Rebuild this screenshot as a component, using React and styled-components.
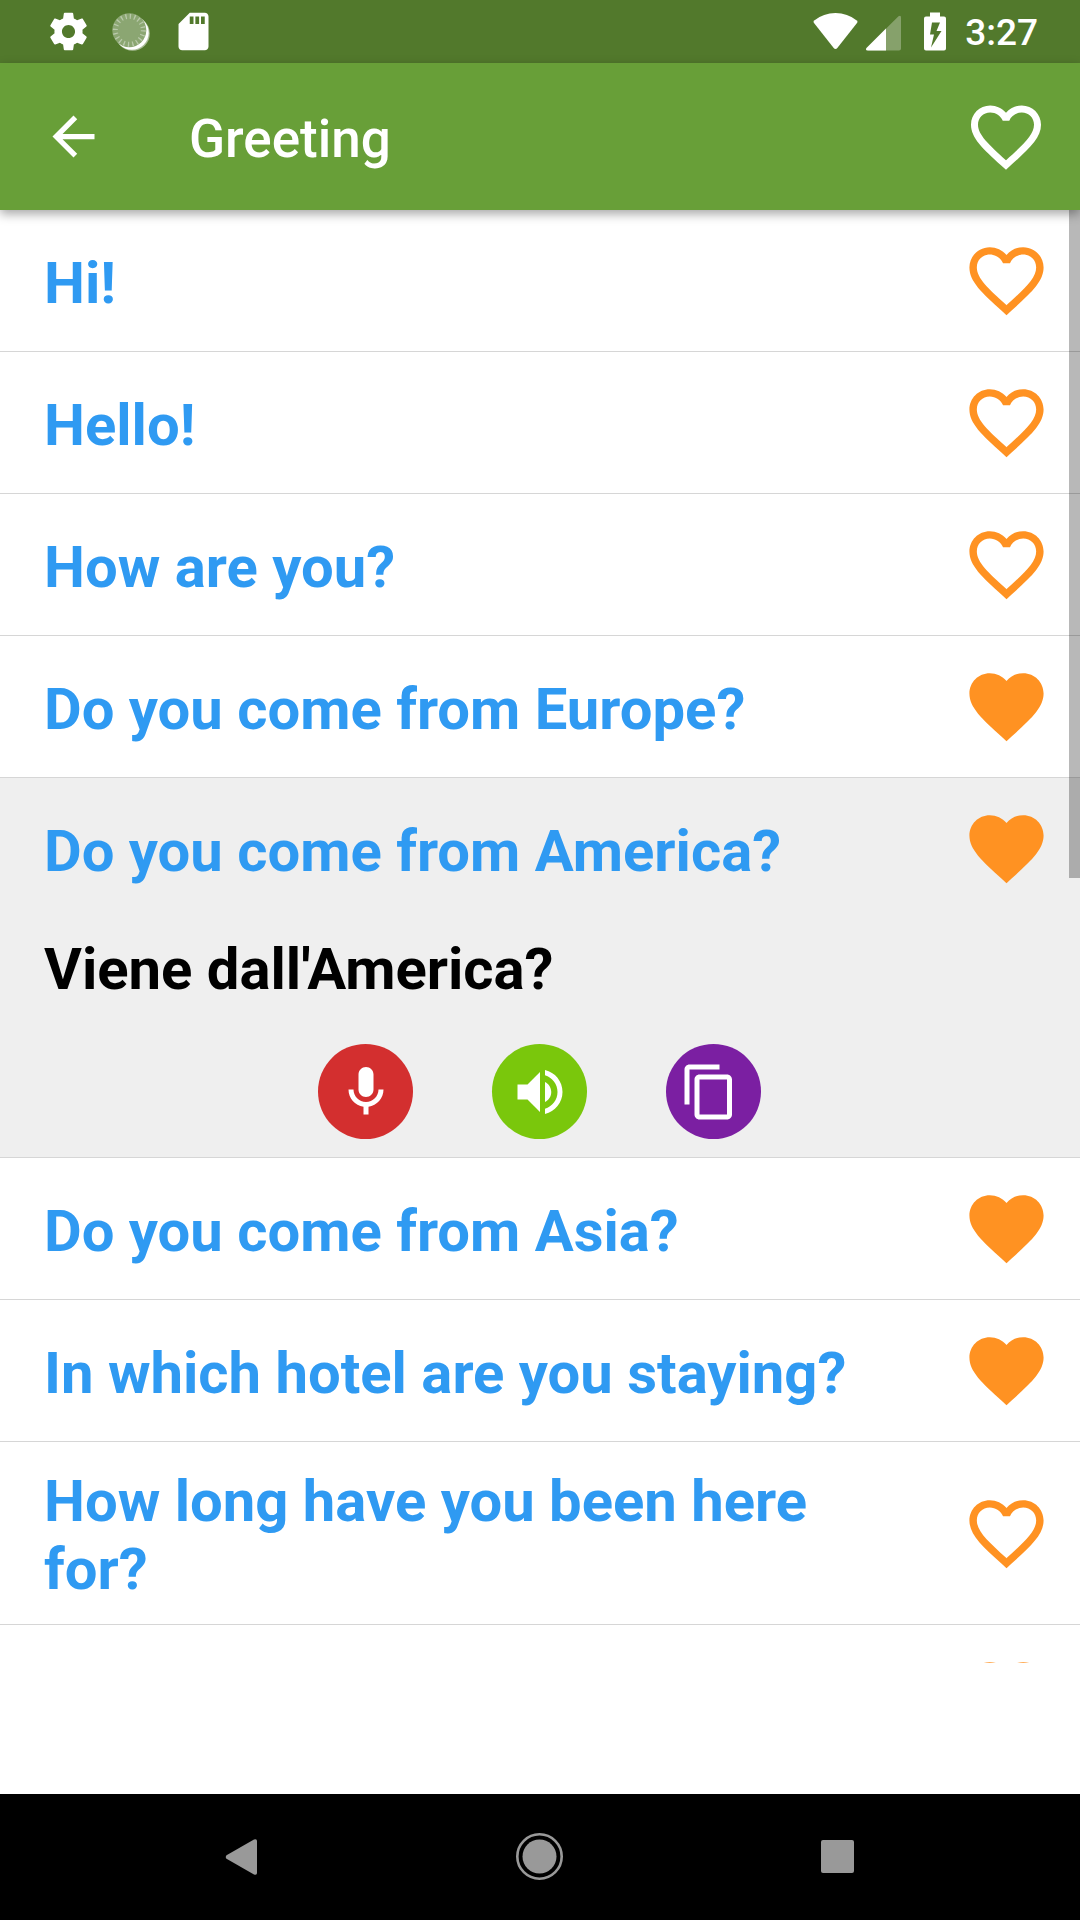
import React, { useState } from "react"
import styled, { createGlobalStyle } from "styled-components"

const GlobalStyle = createGlobalStyle`
  * {
    box-sizing: border-box;
  }
  body {
    margin: 0;
    background: #fff;
    font-family: Roboto, sans-serif;
  }
  button {
    padding: 0;
    border: none;
    background: none;
    font: inherit;
    cursor: pointer;
  }
  svg {
    display: block;
    flex: none;
  }
`

const Screen = styled.div`
  display: flex;
  flex-direction: column;
  height: 100vh;
`

const StatusBar = styled.div`
  display: flex;
  justify-content: space-between;
  align-items: center;
  flex: none;
  height: 63px;
  padding: 0 42px 0 46px;
  background: #52792c;
  color: #fff;
`

const StatusGroup = styled.div`
  display: flex;
  align-items: center;
  gap: ${({ $gap }) => $gap}px;
`

const Clock = styled.time`
  padding-top: 3px;
  font-size: 37px;
  font-weight: 500;
  line-height: 44px;
`

const AppBar = styled.header`
  position: relative;
  z-index: 2;
  display: flex;
  align-items: center;
  flex: none;
  height: 147px;
  padding: 0 32px 0 42px;
  background: #689f38;
  color: #fff;
  box-shadow: 0 4px 10px rgba(0, 0, 0, 0.35);
  h1 {
    flex: 1;
    margin: 0;
    padding: 4px 0 0 84px;
    font-size: 53px;
    font-weight: 500;
    line-height: 62px;
  }
`

const IconButton = styled.button`
  display: flex;
  flex: none;
  color: ${({ $color }) => $color || "#fff"};
`

const ListArea = styled.main`
  position: relative;
  flex: 1;
  min-height: 0;
  overflow: hidden;
`

const ScrollThumb = styled.div`
  position: absolute;
  top: 0;
  right: 0;
  width: 11px;
  height: 46%;
  background: rgba(0, 0, 0, 0.28);
`

const PhraseList = styled.ul`
  margin: 0;
  padding: 0;
  list-style: none;
`

const PhraseItem = styled.li`
  border-bottom: 1px solid #d6d6d6;
  background: ${({ $open }) => ($open ? "#efefef" : "#fff")};
`

const PhraseRow = styled.div`
  display: flex;
  align-items: center;
  min-height: 141px;
  padding: 21px 29px 21px 44px;
`

const PhraseText = styled.button`
  flex: 1;
  padding: 4px 110px 0 0;
  color: #2f9af2;
  font-size: 58px;
  font-weight: 700;
  line-height: 68px;
  text-align: left;
`

const Answer = styled.div`
  padding: 16px 45px 18px 44px;
  p {
    margin: 0 0 41px;
    color: #000;
    font-size: 58px;
    font-weight: 700;
    line-height: 68px;
  }
`

const Actions = styled.div`
  display: flex;
  justify-content: center;
  gap: 79px;
`

const RoundButton = styled.button`
  display: flex;
  align-items: center;
  justify-content: center;
  width: 95px;
  height: 95px;
  border-radius: 50%;
  background: ${({ $color }) => $color};
  color: #fff;
`

const AdSlot = styled.div`
  flex: none;
  height: 131px;
`

const NavBar = styled.nav`
  display: flex;
  justify-content: center;
  align-items: center;
  gap: 198px;
  flex: none;
  height: 126px;
  background: #000;
  button {
    display: flex;
    justify-content: center;
    width: 100px;
    color: #999;
  }
`

const Icon = ({ size, children, box = 24 }) => (
  <svg
    width={size}
    height={size}
    viewBox={`0 0 ${box} ${box}`}
    fill="currentColor"
    aria-hidden="true"
  >
    {children}
  </svg>
)

const HEART =
  "M12 21.35l-1.45-1.32C5.4 15.36 2 12.28 2 8.5 2 5.42 4.42 3 7.5 3c1.74 0 3.41.81 4.5 2.09C13.09 3.81 14.76 3 16.5 3 19.58 3 22 5.42 22 8.5c0 3.78-3.4 6.86-8.55 11.54L12 21.35z"
const HEART_BORDER =
  "M16.5 3c-1.74 0-3.41.81-4.5 2.09C10.91 3.81 9.24 3 7.5 3 4.42 3 2 5.42 2 8.5c0 3.78 3.4 6.86 8.55 11.54L12 21.35l1.45-1.32C18.6 15.36 22 12.28 22 8.5 22 5.42 19.58 3 16.5 3zm-4.4 15.55l-.1.1-.1-.1C7.14 14.24 4 11.39 4 8.5 4 6.5 5.5 5 7.5 5c1.54 0 3.04.99 3.57 2.36h1.87C13.46 5.99 14.96 5 16.5 5c2 0 3.5 1.5 3.5 3.5 0 2.89-3.14 5.74-7.9 10.05z"

const Heart = ({ size, filled }) => (
  <Icon size={size}>
    <path d={filled ? HEART : HEART_BORDER} />
  </Icon>
)

const Spinner = () => (
  <Icon size={38} box={38}>
    <circle cx="20.6" cy="20.6" r="17.2" opacity="0.5" />
    <circle cx="19.8" cy="19.8" r="16.9" />
    <circle cx="17.3" cy="17.3" r="17" fill="#8ba672" />
    <circle
      cx="17.3"
      cy="17.3"
      r="14"
      fill="none"
      stroke="#b9c9aa"
      strokeWidth="5"
      strokeDasharray="1.3 3.1"
    />
  </Icon>
)

const phrases = [
  { text: "Hi!" },
  { text: "Hello!" },
  { text: "How are you?" },
  { text: "Do you come from Europe?", liked: true },
  {
    text: "Do you come from America?",
    answer: "Viene dall'America?",
    liked: true,
  },
  { text: "Do you come from Asia?", liked: true },
  { text: "In which hotel are you staying?", liked: true },
  { text: "How long have you been here for?" },
  { text: "" },
]

const Phrase = ({ text, answer, liked, open, onToggle }) => {
  const [favorite, setFavorite] = useState(Boolean(liked))

  return (
    <PhraseItem $open={open}>
      <PhraseRow>
        <PhraseText aria-expanded={open} onClick={onToggle}>
          {text}
        </PhraseText>
        <IconButton
          $color="#ff9222"
          aria-label="Favorite"
          aria-pressed={favorite}
          onClick={() => setFavorite(!favorite)}
        >
          <Heart size={89} filled={favorite} />
        </IconButton>
      </PhraseRow>
      {open && answer && (
        <Answer>
          <p>{answer}</p>
          <Actions>
            <RoundButton $color="#d32f2f" aria-label="Record">
              <Icon size={60}>
                <path d="M12 14c1.66 0 3-1.34 3-3V5c0-1.66-1.34-3-3-3S9 3.34 9 5v6c0 1.66 1.34 3 3 3zm5-3c0 2.76-2.24 5-5 5s-5-2.24-5-5H5c0 3.53 2.61 6.43 6 6.92V21h2v-3.08c3.39-.49 6-3.39 6-6.92h-2z" />
              </Icon>
            </RoundButton>
            <RoundButton $color="#7ac70c" aria-label="Listen">
              <Icon size={60}>
                <path d="M3 9v6h4l5 5V4L7 9H3zm13.5 3c0-1.77-1.02-3.29-2.5-4.03v8.05c1.48-.73 2.5-2.25 2.5-4.02zM14 3.23v2.06c2.89.86 5 3.54 5 6.71s-2.11 5.85-5 6.71v2.06c4.01-.91 7-4.49 7-8.77s-2.99-7.86-7-8.77z" />
              </Icon>
            </RoundButton>
            <RoundButton $color="#7b1fa2" aria-label="Copy">
              <Icon size={60}>
                <path d="M14.2 1h-12c-1.1 0-2 .9-2 2v14h2V3h12V1zm3 4h-11c-1.1 0-2 .9-2 2v14c0 1.1.9 2 2 2h11c1.1 0 2-.9 2-2V7c0-1.1-.9-2-2-2zm0 16h-11V7h11v14z" />
              </Icon>
            </RoundButton>
          </Actions>
        </Answer>
      )}
    </PhraseItem>
  )
}

const App = () => {
  const [openIndex, setOpenIndex] = useState(4)

  return (
    <Screen>
      <GlobalStyle />
      <StatusBar>
        <StatusGroup $gap={21}>
          <Icon size={45}>
            <path d="M19.43 12.98c.04-.32.07-.64.07-.98s-.03-.66-.07-.98l2.11-1.65c.19-.15.24-.42.12-.64l-2-3.46c-.12-.22-.39-.3-.61-.22l-2.49 1c-.52-.4-1.08-.73-1.69-.98l-.38-2.65C14.46 2.18 14.25 2 14 2h-4c-.25 0-.46.18-.49.42l-.38 2.65c-.61.25-1.17.59-1.69.98l-2.49-1c-.23-.09-.49 0-.61.22l-2 3.46c-.13.22-.07.49.12.64l2.11 1.65c-.04.32-.07.65-.07.98s.03.66.07.98l-2.11 1.65c-.19.15-.24.42-.12.64l2 3.46c.12.22.39.3.61.22l2.49-1c.52.4 1.08.73 1.69.98l.38 2.65c.03.24.24.42.49.42h4c.25 0 .46-.18.49-.42l.38-2.65c.61-.25 1.17-.59 1.69-.98l2.49 1c.23.09.49 0 .61-.22l2-3.46c.12-.22.07-.49-.12-.64l-2.11-1.65zM12 15.5c-1.93 0-3.5-1.57-3.5-3.5s1.57-3.5 3.5-3.5 3.5 1.57 3.5 3.5-1.57 3.5-3.5 3.5z" />
          </Icon>
          <Spinner />
          <Icon size={45}>
            <path d="M18 2h-8L4.02 8 4 20c0 1.1.9 2 2 2h12c1.1 0 2-.9 2-2V4c0-1.1-.9-2-2-2zm-6 6h-2V4h2v4zm3 0h-2V4h2v4zm3 0h-2V4h2v4z" />
          </Icon>
        </StatusGroup>
        <StatusGroup $gap={8}>
          <Icon size={45} box={45}>
            <path d="M22.5 40q-1 0-2-1.2L.8 13.8Q0 12.5 1.2 11.500 10.500 4 22.500 4T43.800 11.500q1.200 1 .4 2.300L24.500 38.800q-1 1.200-2 1.200z" />
          </Icon>
          <Icon size={38} box={38}>
            <path
              d="M32.500 3.300Q35 1.500 35 4.500V35.500q0 2-2 2H2q-3 0-1.500-2.500z"
              opacity="0.3"
            />
            <path d="M20 15.500v22H2q-3 0-1.500-2.500z" />
          </Icon>
          <Icon size={45} box={45}>
            <path
              fillRule="evenodd"
              d="M18 3.500h10v4h4q2 0 2 2v30q0 2-2 2H14q-2 0-2-2v-30q0-2 2-2h4zM20 13.500l-2 12h4l-3 13L29.500 22h-5L28 13.500z"
            />
          </Icon>
          <Clock>3:27</Clock>
        </StatusGroup>
      </StatusBar>
      <AppBar>
        <IconButton aria-label="Back">
          <Icon size={63}>
            <path d="M20 11H7.83l5.59-5.59L12 4l-8 8 8 8 1.41-1.41L7.83 13H20v-2z" />
          </Icon>
        </IconButton>
        <h1>Greeting</h1>
        <IconButton aria-label="Favorites">
          <Heart size={84} />
        </IconButton>
      </AppBar>
      <ListArea>
        <PhraseList>
          {phrases.map((phrase, i) => (
            <Phrase
              key={i}
              {...phrase}
              open={openIndex === i}
              onToggle={() => setOpenIndex(openIndex === i ? -1 : i)}
            />
          ))}
        </PhraseList>
        <ScrollThumb />
      </ListArea>
      <AdSlot />
      <NavBar>
        <button aria-label="Back">
          <Icon size={48} box={48}>
            <path d="M8.500 22.200Q7 24 8.500 25.800L36 41.500q3 1 3-1.500V8q0-2.500-3-1.500z" />
          </Icon>
        </button>
        <button aria-label="Home">
          <Icon size={48} box={48}>
            <circle cx="23.500" cy="23.500" r="17" />
            <circle
              cx="23.500"
              cy="23.500"
              r="22.200"
              fill="none"
              stroke="currentColor"
              strokeWidth="2.600"
            />
          </Icon>
        </button>
        <button aria-label="Recents">
          <Icon size={48} box={48}>
            <rect x="7" y="7" width="33" height="33" rx="2" />
          </Icon>
        </button>
      </NavBar>
    </Screen>
  )
}

export default App
